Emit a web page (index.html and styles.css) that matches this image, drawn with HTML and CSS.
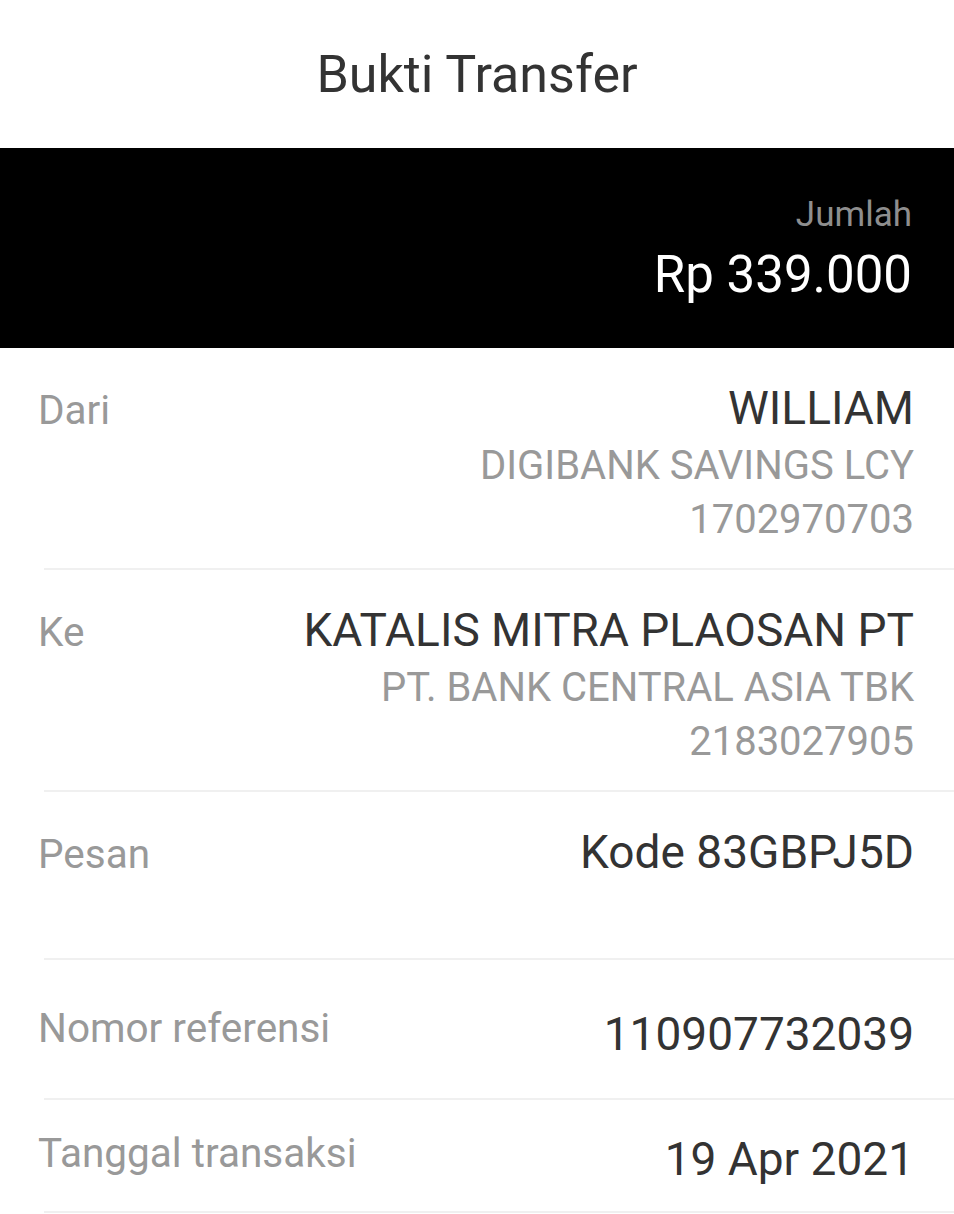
FILE: index.html
```html
<!DOCTYPE html>
<html lang="id">
<head>
    <meta charset="UTF-8">
    <meta name="viewport" content="width=device-width, initial-scale=1.0">
    <title>Bukti Transfer</title>
    <link rel="stylesheet" href="styles.css">
</head>
<body>
    <div class="receipt">
        <header class="title-bar">
            <h1>Bukti Transfer</h1>
        </header>

        <section class="amount">
            <div class="amount-label">Jumlah</div>
            <div class="amount-value">Rp 339.000</div>
        </section>

        <div class="detail-row">
            <div class="detail-label">Dari</div>
            <div class="detail-value">
                <div class="main">WILLIAM</div>
                <div class="sub">DIGIBANK SAVINGS LCY</div>
                <div class="sub">1702970703</div>
            </div>
        </div>
        <div class="divider"></div>

        <div class="detail-row">
            <div class="detail-label">Ke</div>
            <div class="detail-value">
                <div class="main">KATALIS MITRA PLAOSAN PT</div>
                <div class="sub">PT. BANK CENTRAL ASIA TBK</div>
                <div class="sub">2183027905</div>
            </div>
        </div>
        <div class="divider"></div>

        <div class="detail-row">
            <div class="detail-label">Pesan</div>
            <div class="detail-value">
                <div class="main">Kode 83GBPJ5D</div>
                <div class="sub empty"></div>
            </div>
        </div>
        <div class="divider"></div>

        <div class="detail-row single ref">
            <div class="detail-label">Nomor referensi</div>
            <div class="detail-value">
                <div class="main">110907732039</div>
            </div>
        </div>
        <div class="divider"></div>

        <div class="detail-row single date">
            <div class="detail-label">Tanggal transaksi</div>
            <div class="detail-value">
                <div class="main">19 Apr 2021</div>
            </div>
        </div>
        <div class="divider"></div>
    </div>
</body>
</html>
```

FILE: styles.css
```css
body {
    margin: 0;
    padding: 0;
    background: #fff;
    font-family: Roboto, "Liberation Sans", Arial, sans-serif;
    color: #333;
}
.receipt {
    width: 954px;
}
.title-bar {
    height: 148px;
    box-sizing: border-box;
    padding-top: 45px;
    text-align: center;
}
.title-bar h1 {
    margin: 0;
    font-size: 52px;
    line-height: 60px;
    font-weight: 400;
    color: #333;
}
.amount {
    height: 200px;
    box-sizing: border-box;
    padding: 47px 42px 0 0;
    background: #000;
    text-align: right;
}
.amount-label {
    font-size: 35px;
    line-height: 40px;
    color: #8e8e8e;
}
.amount-value {
    margin-top: 10px;
    font-size: 51px;
    line-height: 60px;
    color: #fff;
}
.detail-row {
    display: flex;
    justify-content: space-between;
    align-items: flex-start;
    padding: 33px 40px 21px 38px;
}
.detail-label {
    margin-top: 2px;
    font-size: 40.5px;
    line-height: 54px;
    color: #999;
    white-space: nowrap;
}
.detail-value {
    text-align: right;
}
.detail-value .main {
    font-size: 46px;
    line-height: 54px;
    color: #333;
}
.detail-value .sub {
    font-size: 40px;
    line-height: 54px;
    color: #999;
}
.detail-value .main + .sub {
    margin-top: 4px;
}
.detail-value .empty {
    height: 54px;
}
.detail-row.single .detail-label {
    margin-top: 0;
}
.detail-row.single .detail-value {
    margin-top: 6px;
}
.detail-row.ref {
    padding-top: 41px;
    padding-bottom: 37px;
}
.detail-row.date {
    padding-top: 26px;
    padding-bottom: 25px;
}
.divider {
    height: 2px;
    margin-left: 44px;
    background: #f0f0f0;
}
```
